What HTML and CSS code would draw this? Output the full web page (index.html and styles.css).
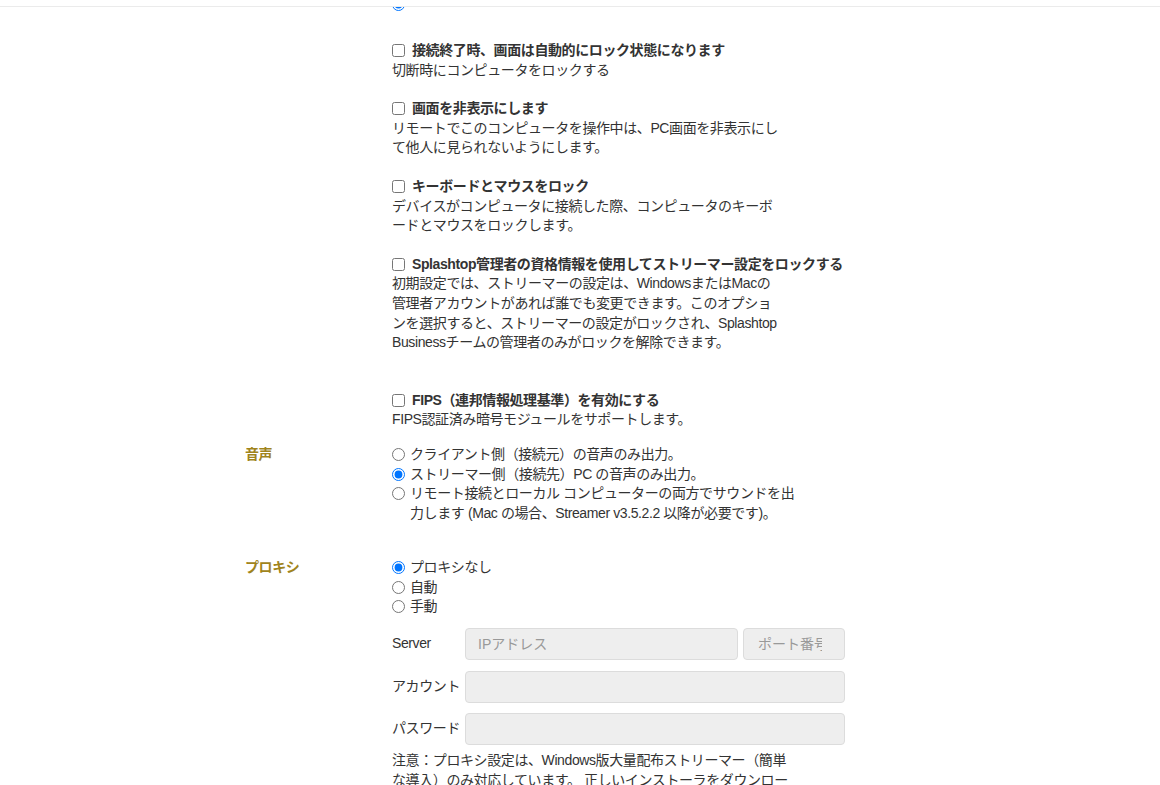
FILE: index.html
```html
<!DOCTYPE html>
<html lang="ja">
<head>
    <meta charset="UTF-8">
    <title>ストリーマー設定</title>
    <link rel="stylesheet" href="styles.css">
</head>
<body>

    <div class="top-bar"></div>

    <div class="settings">

        <!-- セキュリティ -->
        <div class="row">
            <div class="row-label"></div>
            <div class="row-body">
                <label class="option first-option"><input type="radio" name="prev" checked><span></span></label>

                <div class="check-block">
                    <label class="check-title"><input type="checkbox">接続終了時、画面は自動的にロック状態になります</label>
                    <div class="desc">切断時にコンピュータをロックする</div>
                </div>

                <div class="check-block">
                    <label class="check-title"><input type="checkbox">画面を非表示にします</label>
                    <div class="desc">リモートでこのコンピュータを操作中は、PC画面を非表示にし<br>て他人に見られないようにします。</div>
                </div>

                <div class="check-block">
                    <label class="check-title"><input type="checkbox">キーボードとマウスをロック</label>
                    <div class="desc">デバイスがコンピュータに接続した際、コンピュータのキーボ<br>ードとマウスをロックします。</div>
                </div>

                <div class="check-block spaced">
                    <label class="check-title"><input type="checkbox">Splashtop管理者の資格情報を使用してストリーマー設定をロックする</label>
                    <div class="desc">初期設定では、ストリーマーの設定は、WindowsまたはMacの<br>管理者アカウントがあれば誰でも変更できます。このオプショ<br>ンを選択すると、ストリーマーの設定がロックされ、Splashtop<br>Businessチームの管理者のみがロックを解除できます。</div>
                </div>

                <div class="check-block last">
                    <label class="check-title"><input type="checkbox">FIPS（連邦情報処理基準）を有効にする</label>
                    <div class="desc">FIPS認証済み暗号モジュールをサポートします。</div>
                </div>
            </div>
        </div>

        <!-- 音声 -->
        <div class="row sound-row">
            <div class="row-label">音声</div>
            <div class="row-body">
                <label class="option"><input type="radio" name="sound"><span>クライアント側（接続元）の音声のみ出力。</span></label>
                <label class="option"><input type="radio" name="sound" checked><span>ストリーマー側（接続先）PC の音声のみ出力。</span></label>
                <label class="option"><input type="radio" name="sound"><span>リモート接続とローカル コンピューターの両方でサウンドを出<br>力します (Mac の場合、Streamer v3.5.2.2 以降が必要です)。</span></label>
            </div>
        </div>

        <!-- プロキシ -->
        <div class="row proxy-row">
            <div class="row-label">プロキシ</div>
            <div class="row-body">
                <label class="option"><input type="radio" name="proxy" checked><span>プロキシなし</span></label>
                <label class="option"><input type="radio" name="proxy"><span>自動</span></label>
                <label class="option"><input type="radio" name="proxy"><span>手動</span></label>

                <div class="proxy-form">
                    <div class="field">
                        <span class="field-label">Server</span>
                        <input class="text-input" type="text" placeholder="IPアドレス" disabled>
                        <input class="text-input port" type="text" placeholder="ポート番号" disabled>
                    </div>
                    <div class="field">
                        <span class="field-label">アカウント</span>
                        <input class="text-input" type="text" disabled>
                    </div>
                    <div class="field">
                        <span class="field-label">パスワード</span>
                        <input class="text-input" type="password" disabled>
                    </div>
                </div>

                <div class="note">注意：プロキシ設定は、Windows版大量配布ストリーマー（簡単<br>な導入）のみ対応しています。 正しいインストーラをダウンロー</div>
            </div>
        </div>

    </div>

</body>
</html>
```

FILE: styles.css
```css
body {
    margin: 0;
    padding: 0;
    background: #fff;
    color: #333;
    font-family: "Liberation Sans", Arial, "Noto Sans CJK JP", sans-serif;
    font-size: 14px;
    line-height: 1.4;
    letter-spacing: -0.4px;
    overflow: hidden;
}

/* Top bar */
.top-bar {
    position: fixed;
    top: 0;
    left: 0;
    right: 0;
    height: 6px;
    background: #fff;
    border-bottom: 1px solid #ebebeb;
    z-index: 10;
}

/* Settings rows */
.settings { margin-top: -1px; padding-left: 245px; }
.row { display: grid; grid-template-columns: 147px 453px; }
.row-label { font-weight: bold; color: #a0841c; }
.row-body { display: flex; flex-direction: column; }

.sound-row { margin-top: 15px; }
.proxy-row { margin-top: 35px; }

/* Checkbox blocks */
.check-block { margin-bottom: 19px; }
.check-block.spaced { margin-bottom: 38px; }
.check-block.last { margin-bottom: 0; }
.check-title { display: flex; align-items: center; font-weight: bold; white-space: nowrap; }
.check-title input { width: 13px; height: 13px; margin: 0 7px 0 0; }
.desc { white-space: nowrap; }

/* Radio options */
.option { display: flex; align-items: flex-start; white-space: nowrap; }
.option input { width: 13px; height: 13px; margin: 3px 5px 0 0; flex: none; }
.first-option { margin-top: -4px; margin-bottom: 30px; }

/* Proxy form */
.proxy-form { margin-top: 11px; display: flex; flex-direction: column; gap: 10.5px; }
.field { display: flex; align-items: center; gap: 5px; }
.field-label { width: 68px; flex: none; white-space: nowrap; }
.text-input {
    box-sizing: border-box;
    flex: 1;
    min-width: 0;
    height: 32px;
    padding: 0 12px;
    background: #eee;
    border: 1px solid #dcdcdc;
    border-radius: 4px;
    font-family: inherit;
    font-size: 14px;
    color: #555;
}
.text-input::placeholder { color: #999; }
.text-input.port { flex: none; width: 102px; padding: 0 22px 0 14px; }

.note { margin-top: 6px; white-space: nowrap; }
```
